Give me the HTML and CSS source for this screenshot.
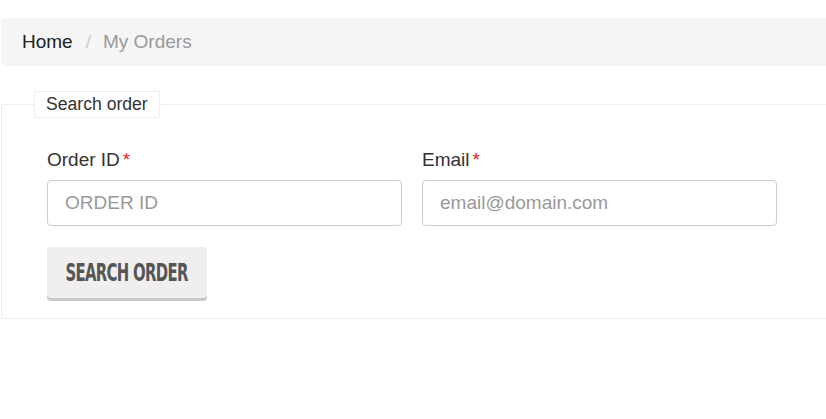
FILE: index.html
```html
<!DOCTYPE html>
<html lang="en">
<head>
  <meta charset="UTF-8">
  <title>My Orders</title>
  <meta name="viewport" content="width=device-width, initial-scale=1">
  <link rel="stylesheet" href="styles.css">
</head>
<body>

  <div class="page">
    <ol class="breadcrumb">
      <li><a href="#">Home</a></li>
      <li class="active">My Orders</li>
    </ol>

    <form class="search-form">
      <fieldset>
        <legend>Search order</legend>

        <div class="form-row">
          <div class="form-group">
            <label for="order-id">Order ID<span class="required">*</span></label>
            <input type="text" id="order-id" placeholder="ORDER ID">
          </div>
          <div class="form-group">
            <label for="email">Email<span class="required">*</span></label>
            <input type="email" id="email" placeholder="email@domain.com">
          </div>
        </div>

        <button type="submit" class="search-btn"><span>Search order</span></button>
      </fieldset>
    </form>
  </div>

</body>
</html>
```

FILE: styles.css
```css
body {
  font-family: 'Liberation Sans', Arial, sans-serif;
  font-size: 19px;
  color: #333;
  background: #fff;
  margin: 0;
}

.page {
  padding: 18px 0 0 1px;
}

.breadcrumb {
  list-style: none;
  margin: 0 0 25px;
  padding: 10px 21px;
  line-height: 28px;
  background: #f5f5f5;
  border-radius: 4px 0 0 4px;
  display: flex;
}

.breadcrumb a {
  color: #222;
  text-decoration: none;
}

.breadcrumb li + li::before {
  content: "/";
  color: #ccc;
  padding: 0 12px 0 13px;
}

.breadcrumb .active {
  color: #999;
}

.search-form fieldset {
  margin: 0;
  border: 1px solid #eee;
  border-right: none;
  padding: 28px 45px 20px;
}

.search-form legend {
  font-size: 17.6px;
  padding: 2px 11px 3px;
  margin-left: -13px;
  border: 1px solid #eee;
  line-height: 20px;
}

.form-row {
  display: grid;
  grid-template-columns: 355px 355px;
  gap: 20px;
}

.form-group {
  display: flex;
  flex-direction: column;
  margin-bottom: 21px;
}

.form-group label {
  line-height: 27px;
  margin-bottom: 7px;
}

.required {
  color: #e3261c;
  margin-left: 3px;
}

.form-group input {
  height: 46px;
  box-sizing: border-box;
  border: 1px solid #ccc;
  border-radius: 4px;
  padding: 0 17px;
  font-family: inherit;
  font-size: 19px;
  color: #555;
}

.form-group input::placeholder {
  color: #999;
}

.search-btn {
  display: flex;
  align-items: center;
  justify-content: center;
  width: 160px;
  height: 51px;
  border: none;
  border-radius: 4px;
  background: #f0eeee;
  box-shadow: 0 3px 0 #c8c8c8;
  color: #555;
  cursor: pointer;
  padding: 0;
  white-space: nowrap;
}

.search-btn span {
  flex-shrink: 0;
  font-family: 'DejaVu Sans Condensed', 'DejaVu Sans', sans-serif;
  font-stretch: condensed;
  font-weight: bold;
  font-size: 25px;
  text-transform: uppercase;
  letter-spacing: -1px;
  transform: scaleX(0.66);
}
```
